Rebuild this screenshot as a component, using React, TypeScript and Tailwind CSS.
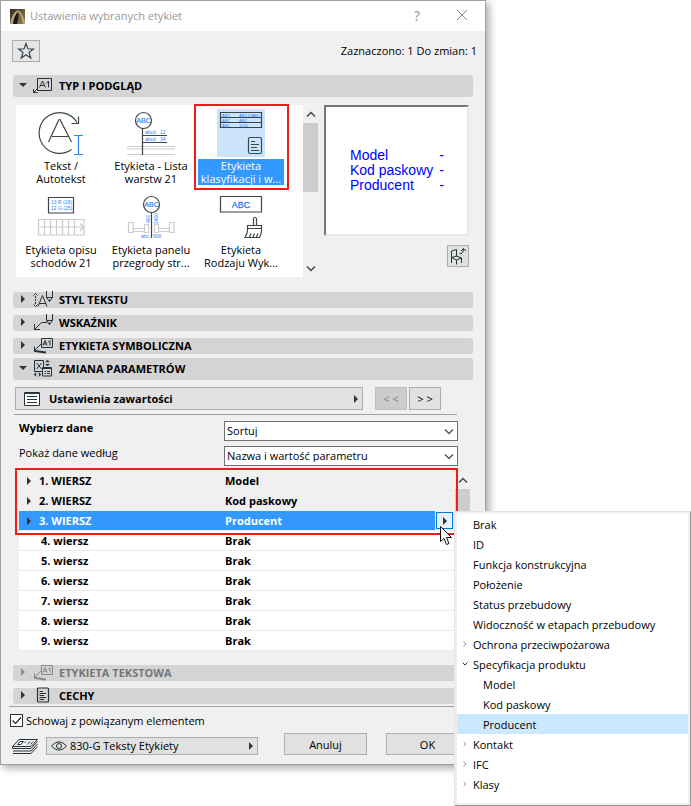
import React from "react";
import clsx from "clsx";

const rows = [
  { name: "1. WIERSZ", value: "Model", group: true },
  { name: "2. WIERSZ", value: "Kod paskowy", group: true },
  { name: "3. WIERSZ", value: "Producent", group: true, active: true },
  { name: "4. wiersz", value: "Brak" },
  { name: "5. wiersz", value: "Brak" },
  { name: "6. wiersz", value: "Brak" },
  { name: "7. wiersz", value: "Brak" },
  { name: "8. wiersz", value: "Brak" },
  { name: "9. wiersz", value: "Brak" },
];

const menuItems = [
  { label: "Brak" },
  { label: "ID" },
  { label: "Funkcja konstrukcyjna" },
  { label: "Położenie" },
  { label: "Status przebudowy" },
  { label: "Widoczność w etapach przebudowy" },
  { label: "Ochrona przeciwpożarowa", arrow: "right" },
  { label: "Specyfikacja produktu", arrow: "down" },
  { label: "Model", child: true },
  { label: "Kod paskowy", child: true },
  { label: "Producent", child: true, active: true },
  { label: "Kontakt", arrow: "right" },
  { label: "IFC", arrow: "right" },
  { label: "Klasy", arrow: "right" },
];

type IconProps = { className?: string };

function TriangleRight({ className }: IconProps) {
  return (
    <svg viewBox="0 0 4 8" className={clsx("w-1 h-2 shrink-0", className)} fill="#333">
      <path d="M0 0L4 4L0 8Z" />
    </svg>
  );
}

function TriangleDown() {
  return (
    <svg viewBox="0 0 8 4" className="w-2 h-1 shrink-0" fill="#333">
      <path d="M0 0H8L4 4Z" />
    </svg>
  );
}

function Chevron({ className }: IconProps) {
  return (
    <svg viewBox="0 0 10 6" className={clsx("w-[10px] h-[6px]", className)} fill="none" stroke="currentColor" strokeWidth="1.4">
      <path d="M1 0.5L5 4.5L9 0.5" />
    </svg>
  );
}

/* ---------- section icons, all on a 22x18 grid ---------- */

function SectionIcon({ children }: { children: React.ReactNode }) {
  return (
    <svg viewBox="0 0 22 18" className="w-[22px] h-[18px] -my-1 shrink-0" fill="none" stroke="#26323a" strokeWidth="1">
      {children}
    </svg>
  );
}

function IconPreview() {
  return (
    <SectionIcon>
      <path d="M4.5 2.5H18.5V14.5H4.5V2.5M4.5 12.5L0.5 16.5M0.5 13V16.5H4.5" />
      <path d="M6.5 11.5L9.5 5L12.5 11.5M7.5 9.5H11.5M13 7.5L15.5 5V11.5" />
    </SectionIcon>
  );
}

function IconTextStyle() {
  return (
    <SectionIcon>
      <path d="M2.5 6V15" strokeDasharray="2 1" />
      <path d="M0.5 5.5L2.5 3.5L4.5 5.500M0.5 14.5L2.5 16.5L4.5 14.5" />
      <path d="M5 16.5L9.5 5.5L14 16.5M6.5 13.5H13" />
      <path d="M13.5 1V7.5L16.5 11.5L19.5 7.5V1M13.5 7.5H19.5M16.5 9.5V12" />
    </SectionIcon>
  );
}

function IconPointer() {
  return (
    <SectionIcon>
      <path d="M1.5 11V16.5H7M1.5 16.5L8.5 9.5H14" />
      <path d="M13.5 1V7.5L16.5 11.5L19.5 7.5V1M13.5 7.5H19.5M16.5 9.5V12" />
    </SectionIcon>
  );
}

function IconSymbolic() {
  return (
    <SectionIcon>
      <path d="M8.5 2.5H19.5V11.5H8.5Z" />
      <path d="M10 9.5L12 4.5L14 9.5M10.5 8H13.5M15 6.5L17 4.5V9.5" />
      <path d="M8.5 7.5L1.5 14.5M1.5 10.5V15.5H5.5" />
      <path d="M2 15L13 16.5" strokeWidth="2" />
    </SectionIcon>
  );
}

function IconParams() {
  return (
    <SectionIcon>
      <path d="M1.5 1.5H10.5V12.5H1.5Z" />
      <path d="M3.5 4L8.5 10M8.5 4L3.5 10" />
      <path d="M9.5 8.5H18.5V17H9.5Z" fill="#d4d4d4" />
      <path d="M9.5 9.5H18.5M11.5 12.5H13M14 12.5H17M11.5 14.5H13M14 14.5H17" />
      <path d="M12.5 3L14.5 1L16.5 3ZM12.5 5L14.5 7L16.5 5ZM3 13.5L1 15.5L3 17.5ZM6 13.5L8 15.5L6 17.5Z" fill="#26323a" strokeWidth="0.3" />
    </SectionIcon>
  );
}

function IconDoc() {
  return (
    <SectionIcon>
      <rect x="4.5" y="2" width="11" height="14" rx="1" strokeWidth="1.2" />
      <path d="M6.5 5.5H10M6.5 7.5H13M6.5 9.5H11M6.5 11.5H13M6.5 13.5H11" />
    </SectionIcon>
  );
}

/* ---------- label type thumbnails, 48x48 ---------- */

function Thumb({ viewBox = "0 -2 48 48", children }: { viewBox?: string; children: React.ReactNode }) {
  return (
    <svg viewBox={viewBox} className="w-12 h-12 block mx-auto" fill="none" stroke="#3a464e" strokeWidth="1.2" fontFamily="'Liberation Sans', sans-serif">
      {children}
    </svg>
  );
}

function ThumbAutotext() {
  return (
    <Thumb viewBox="0 0 48 48">
      <path d="M40 13.5A20.4 20.4 0 1 0 34.5 40.5" />
      <path d="M34.5 14.5H41.5V7.5" />
      <path d="M11.5 33L21.5 11.5Q22.5 9 23.5 11.5L34.5 33M15 27.5H31.5" />
      <path d="M37 26.5H46M37 45.5H46M41.5 26.5V45.5" stroke="#2f82f0" />
    </Thumb>
  );
}

function ThumbLayers() {
  return (
    <Thumb>
      <path d="M0 35.5H48M0 38H48M0 43.5H48" stroke="#ccc" />
      <circle cx="16.5" cy="9.5" r="8" />
      <path d="M15.5 17.5V44M15.5 24.5H40M15.5 31.5H40" />
      <g fill="#2f82f0" stroke="none">
        <text x="16.5" y="12" fontSize="7" textAnchor="middle" stroke="#2f82f0" strokeWidth="0.2">ABC</text>
        <text x="18" y="23" fontSize="5">abcd</text>
        <text x="33" y="23" fontSize="5">12</text>
        <text x="18" y="30" fontSize="5">abcd</text>
        <text x="33" y="30" fontSize="5">34</text>
      </g>
    </Thumb>
  );
}

function ThumbClassification() {
  return (
    <Thumb viewBox="0 0 48 48">
      <path d="M3.5 3.5H44.5V18.5H3.5ZM3.5 8.5H44.5M3.5 13.5H44.5" />
      <g fill="#2f82f0" stroke="none" fontSize="4">
        <text x="5" y="7.5">ABC</text>
        <text x="22" y="7.5">ABC12ABC</text>
        <text x="5" y="12.5">ABC</text>
        <text x="22" y="12.5">ABC</text>
        <text x="5" y="17.5">ABC</text>
        <text x="22" y="17.5">1000</text>
      </g>
      <rect x="31.5" y="28.5" width="13" height="16" rx="1.5" />
      <path d="M34 32.5H38M34 35.5H42M34 38.5H40M34 41.5H42" />
    </Thumb>
  );
}

function ThumbStairs() {
  return (
    <Thumb>
      <path d="M11.5 2.5H36.5V18H11.5Z" />
      <g fill="#2f82f0" stroke="none" fontSize="5">
        <text x="14" y="9">13 R (18)</text>
        <text x="14" y="15">12 G (25)</text>
      </g>
      <path d="M1.5 24.5H47V40H1.5ZM1.5 32H46M7.5 24V40M13.5 24V40M19.5 24V40M25.5 24V40M31.5 24V40M37.5 24V40M43 28.5L46.5 32L43 36" stroke="#ccc" />
    </Thumb>
  );
}

function ThumbCurtainWall() {
  return (
    <Thumb>
      <path d="M1.5 27.5H6V37.5H1.5ZM17.5 29.5H21.5V37.5H17.5ZM27.5 29.5H31.5V37.5H27.5ZM42.5 27.5H47V37.5H42.5ZM6 33.5H17M6 36.5H17M32 33.5H42M32 36.5H42" stroke="#ccc" />
      <circle cx="24.5" cy="9.5" r="8" />
      <path d="M24.5 17.5V43" />
      <g fill="#2f82f0" stroke="none">
        <text x="24.5" y="12" fontSize="7" textAnchor="middle" stroke="#2f82f0" strokeWidth="0.2">ABC</text>
        <text x="14" y="43" fontSize="5">abc</text>
        <text x="26" y="43" fontSize="5">900</text>
        <text transform="translate(23 28) rotate(-90)" fontSize="5">400</text>
        <text transform="translate(30.5 29) rotate(-90)" fontSize="5">2400</text>
      </g>
    </Thumb>
  );
}

function ThumbBrush() {
  return (
    <Thumb>
      <path d="M3.5 1.5H44.5V17H3.5Z" />
      <text x="24" y="12.5" fontSize="9" textAnchor="middle" fill="#2f82f0" stroke="#2f82f0" strokeWidth="0.3">ABC</text>
      <path d="M36.5 30V23.5Q38 21 39.5 23.5V30M30.5 33.5V30.5H44.5V33.5M30.5 33.5H44.5M30.5 33.5Q31 38 28 42.5H42.5Q45 38 44.5 33.5M32.5 42L34 38.5M36 42L37.5 38.5M39.5 42L41 38.5" />
    </Thumb>
  );
}

const labelTypes = [
  { lines: ["Tekst /", "Autotekst"], Icon: ThumbAutotext },
  { lines: ["Etykieta - Lista", "warstw 21"], Icon: ThumbLayers },
  { lines: ["Etykieta", "klasyfikacji i w..."], Icon: ThumbClassification, active: true },
  { lines: ["Etykieta opisu", "schodów 21"], Icon: ThumbStairs },
  { lines: ["Etykieta panelu", "przegrody str..."], Icon: ThumbCurtainWall },
  { lines: ["Etykieta", "Rodzaju Wyk..."], Icon: ThumbBrush },
];

type SectionProps = {
  title: string;
  icon: React.ReactNode;
  open?: boolean;
  disabled?: boolean;
};

function Section({ title, icon, open, disabled }: SectionProps) {
  return (
    <button
      type="button"
      aria-expanded={!!open}
      disabled={disabled}
      className={clsx("w-full flex items-center rounded-[3px] bg-[#d4d4d4] pl-[6px] pb-[2px] font-bold text-left", open ? "h-[22px]" : "h-4")}
    >
      <span className={clsx("flex items-center", disabled && "opacity-45")}>
        <span className="w-[14px] flex justify-start">{open ? <TriangleDown /> : <TriangleRight className="ml-[2px]" />}</span>
        {icon}
        <span className="pl-1">{title}</span>
      </span>
    </button>
  );
}

function SelectBox({ id, value }: { id: string; value: string }) {
  return (
    <div className="relative flex-1">
      <select id={id} className="appearance-none w-full h-5 block bg-white border border-[#707070] pl-[2px] pb-[2px]">
        <option>{value}</option>
      </select>
      <Chevron className="absolute right-1 top-[8px] text-[#555] pointer-events-none" />
    </div>
  );
}

function ContextMenu() {
  return (
    <div role="menu" className="absolute z-10 left-[19px] top-0 w-[237px] border border-t-[#e3e3e3] border-l-[#e3e3e3] border-r-[#999] border-b-[#999] bg-white font-normal text-black">
      <div className="border-2 border-[#f0f0f0] border-t-[#f4f4f4] pb-[9px]">
        {menuItems.map((item) => (
          <button
            key={item.label}
            type="button"
            role="menuitem"
            className={clsx("w-full h-5 flex items-center text-left whitespace-nowrap", item.active && "bg-[#cce8ff]", item.child && "pl-[10px]")}
          >
            <span className="w-4 flex justify-center">
              {item.arrow && (
                <svg viewBox="0 0 6 6" className="w-[6px] h-[6px]" fill="none" stroke={item.arrow === "down" ? "#333" : "#999"}>
                  <path d={item.arrow === "down" ? "M0.5 1.5L3 4L5.5 1.5" : "M1.5 0.5L4 3L1.5 5.5"} />
                </svg>
              )}
            </span>
            {item.label}
          </button>
        ))}
      </div>
    </div>
  );
}

function Cursor() {
  return (
    <svg viewBox="0 0 13 20" className="absolute z-20 left-[5px] top-[15px] w-[13px] h-5 pointer-events-none" fill="#fff" stroke="#111">
      <path d="M0.5 0.5V15.5L4 12.5L6.5 18.5L9 17.5L6.5 11.5H11.5Z" />
    </svg>
  );
}

function ParameterTable() {
  return (
    <div className="relative flex-1">
      <table className="w-full table-fixed border-separate border-spacing-0 font-bold">
        <tbody>
          {rows.map((row) => (
            <tr key={row.name} className={clsx("h-5", row.active ? "bg-[#3399ff] text-white" : row.group ? "bg-[#f0f0f0]" : "bg-white")}>
              <td className="w-[206px] p-0 border-b border-[#ebebeb]">
                <div className="flex items-center h-[19px]">
                  <span className={row.group ? "w-5 pl-2" : "w-[22px]"}>{row.group && <TriangleRight />}</span>
                  {row.name}
                </div>
              </td>
              <td className="p-0 border-b border-[#ebebeb]">
                <div className="flex items-center justify-between h-[19px]">
                  {row.value}
                  {row.active && (
                    <div className="relative bg-[#f0f0f0] pl-px pr-[2px] h-[19px] flex items-center">
                      <button type="button" aria-label="Wybierz parametr" className="w-[17px] h-[17px] flex items-center justify-center bg-[#e5f1fb] border border-[#0078d7]">
                        <TriangleRight />
                      </button>
                      <Cursor />
                      <ContextMenu />
                    </div>
                  )}
                </div>
              </td>
            </tr>
          ))}
        </tbody>
      </table>
      <div className="absolute -top-[3px] -left-1 -right-[3px] h-[67px] border-2 border-[#f21b1b] pointer-events-none" />
    </div>
  );
}

function App() {
  return (
    <main className="min-h-screen bg-white pr-[205px] font-['Open_Sans','Noto_Sans',sans-serif] text-[11px] leading-[13px] text-black">
      <div className="border border-[#a0a0a0] bg-[#f0f0f0] shadow-[3px_3px_8px_rgba(0,0,0,0.35)]">
        <header className="h-[30px] bg-white flex items-center pl-[9px] pr-[17px] text-[#999]">
          <svg viewBox="0 0 15 15" className="w-[15px] h-[15px]">
            <defs>
              <linearGradient id="logo" x1="0" y1="0" x2="1" y2="1">
                <stop offset="0" stopColor="#2d251c" />
                <stop offset="0.5" stopColor="#6b5a3e" />
                <stop offset="1" stopColor="#8f7c58" />
              </linearGradient>
            </defs>
            <path d="M0 0H15V15H0Z" fill="url(#logo)" />
            <path d="M0 15Q2 4 8 1Q12 3 15 13V15H13Q11 6 8 3Q4 7 3 15Z" fill="#b5a47e" />
            <path d="M3 15Q4 7 8 3Q9 7 7 15Z" fill="#1d1712" />
          </svg>
          <h1 className="pl-[5px] pb-[2px] flex-1">Ustawienia wybranych etykiet</h1>
          <button type="button" aria-label="Pomoc" className="text-[14px] pb-[2px] pr-9">?</button>
          <button type="button" aria-label="Zamknij" className="pb-[2px]">
            <svg viewBox="0 0 12 12" className="w-3 h-3" fill="none" stroke="#888">
              <path d="M1 1L11 11M11 1L1 11" />
            </svg>
          </button>
        </header>

        <div className="flex items-center justify-between pl-[11px] pr-2 pt-[9px]">
          <button type="button" aria-label="Ulubione" className="w-7 h-[22px] flex items-center justify-center border border-[#adadad] bg-[#e6e6e6]">
            <svg viewBox="0 0 18 18" className="w-[18px] h-[18px]" fill="none" stroke="#37474f" strokeWidth="1.2">
              <path d="M9 1.5L11 7H16.5L12 10.5L13.8 16L9 12.7L4.2 16L6 10.5L1.5 7H7Z" />
            </svg>
          </button>
          <p className="pb-[2px]">Zaznaczono: 1 Do zmian: 1</p>
        </div>

        <div className="px-3 pt-[13px]">
          <Section title="TYP I PODGLĄD" icon={<IconPreview />} open />

          <div className="flex pl-[3px] pr-1 pt-2 pb-[15px]">
            <div className="flex-1 flex">
              <div className="flex-1 grid grid-cols-3 gap-x-1 content-start bg-white pl-[2px] pr-[19px] pt-1">
                {labelTypes.map(({ lines, Icon, active }) => (
                  <button key={lines.join(" ")} type="button" className="relative h-[84px] flex flex-col items-stretch text-center whitespace-nowrap">
                    <span className={clsx("w-12 mx-auto block", active && "bg-[#cce4fb]")}>
                      <Icon />
                    </span>
                    <span className={clsx("mt-[2px] block", active && "bg-[#3399ff] text-white")}>
                      <span className="block">{lines[0]}</span>
                      <span className="block">{lines[1]}</span>
                    </span>
                    {active && <span className="absolute -top-[5px] -left-1 -right-[5px] h-[86px] border-2 border-[#f21b1b]" />}
                  </button>
                ))}
              </div>
              <div className="w-[15px] flex flex-col items-center text-[#444]">
                <Chevron className="my-[6px] rotate-180" />
                <div className="w-full h-[69px] bg-[#cdcdcd]" />
                <Chevron className="mt-auto mb-[5px]" />
              </div>
            </div>
            <div className="w-[145px] ml-[6px] flex flex-col items-end">
              <div className="w-full h-[131px] border-2 border-t-[#777] border-l-[#777] border-r-[#e8e8e8] border-b-[#e8e8e8] bg-white pl-6 pr-[23px] flex items-center">
                <dl className="w-full grid grid-cols-[1fr_auto] text-[#0000ff] text-[14px] leading-[15px] font-['Liberation_Sans',sans-serif]">
                  <dt>Model</dt>
                  <dd>-</dd>
                  <dt>Kod paskowy</dt>
                  <dd>-</dd>
                  <dt>Producent</dt>
                  <dd>-</dd>
                </dl>
              </div>
              <button type="button" aria-label="Widok 3D" className="mt-[9px] w-[22px] h-[22px] border border-[#adadad] bg-[#e1e1e1] flex items-center justify-center">
                <svg viewBox="0 0 18 18" className="w-[18px] h-[18px]" fill="none" stroke="#26323a">
                  <path d="M2.5 16V4L7.5 2.5V9.5M2.5 10.5L7.5 9L12.5 11L7.5 13L2.5 10.5M7.5 13V17.5M12.5 11V16M10.5 6.5Q14.5 7 14.5 1.5M12 4L14.5 1.5L17 4" />
                </svg>
              </button>
            </div>
          </div>

          <div className="flex flex-col gap-[7px]">
            <Section title="STYL TEKSTU" icon={<IconTextStyle />} />
            <Section title="WSKAŹNIK" icon={<IconPointer />} />
            <Section title="ETYKIETA SYMBOLICZNA" icon={<IconSymbolic />} />
          </div>
          <div className="pt-1">
            <Section title="ZMIANA PARAMETRÓW" icon={<IconParams />} open />
          </div>

          <div className="flex pt-[7px] pl-[2px] pr-8 pb-1">
            <button type="button" className="flex-1 h-[23px] flex items-center border border-[#adadad] bg-[#e1e1e1] pl-2 pr-1 font-bold">
              <svg viewBox="0 0 16 14" className="w-4 h-[14px]" fill="#fff" stroke="#26323a">
                <path d="M0.5 0.5H15.5V13.5H0.5ZM0.5 1.5H15.5M3 4.5H13M3 7.5H13M3 10.5H13" />
              </svg>
              <span className="pl-[9px] flex-1 text-left">Ustawienia zawartości</span>
              <TriangleRight />
            </button>
            <button type="button" disabled className="w-8 h-[23px] ml-3 border border-[#bfbfbf] bg-[#ccc] text-[#838383]">&lt; &lt;</button>
            <button type="button" className="w-8 h-[23px] ml-[2px] border border-[#adadad] bg-[#e1e1e1]">&gt; &gt;</button>
          </div>

          <div className="ml-px mr-4 border-t border-[#a0a0a0] pt-[6px] flex flex-col gap-[5px]">
            <div className="flex items-start pl-[5px] -mr-px">
              <label htmlFor="dane" className="w-[205px] font-bold">Wybierz dane</label>
              <SelectBox id="dane" value="Sortuj" />
            </div>
            <div className="flex items-start pl-[5px] -mr-px">
              <label htmlFor="wedlug" className="w-[205px]">Pokaż dane według</label>
              <SelectBox id="wedlug" value="Nazwa i wartość parametru" />
            </div>
          </div>

          <div className="flex pt-[5px] pl-[6px] pr-[3px] pb-[14px]">
            <ParameterTable />
            <div className="w-[15px] flex flex-col items-center text-[#444]">
              <Chevron className="my-[6px] rotate-180" />
              <div className="w-full h-[60px] bg-[#cdcdcd]" />
            </div>
          </div>

          <div className="flex flex-col gap-[7px]">
            <Section title="ETYKIETA TEKSTOWA" icon={<IconSymbolic />} disabled />
            <Section title="CECHY" icon={<IconDoc />} />
          </div>
        </div>

        <footer className="mt-[2px] ml-2 mr-3 border-t border-[#a0a0a0] pt-[7px] pb-[9px]">
          <label className="relative flex items-center h-[13px] gap-[3px] pl-px">
            <input type="checkbox" defaultChecked className="peer appearance-none w-[13px] h-[13px] border border-[#333] bg-white" />
            <svg viewBox="0 0 13 13" className="absolute left-px top-0 w-[13px] h-[13px] hidden peer-checked:block pointer-events-none" fill="none" stroke="#222" strokeWidth="1.2">
              <path d="M2.5 6.5L5.5 9.5L11 3.5" />
            </svg>
            Schowaj z powiązanym elementem
          </label>
          <div className="flex items-end pt-[6px] pl-[3px] pr-1">
            <svg viewBox="0 0 26 16" className="w-[26px] h-4 mb-px" fill="none" stroke="#26323a">
              <path d="M7 1.5H25.5L19 8.5H0.5ZM0.5 8.5V10.5H19L25.5 3.5M1 13H19L25.5 6M1 15.5H19L25.5 8.5" />
              <path d="M8 3.5L5.5 6.5H9L11.5 3.5ZM14 3.5L12.5 5M18 3.5L15.5 6.5M21 3.5L18.5 6.5" />
            </svg>
            <button type="button" className="w-[212px] h-[18px] ml-2 flex items-center border border-[#adadad] bg-[#e1e1e1] pl-1 pr-1">
              <svg viewBox="0 0 16 12" className="w-4 h-3" fill="none" stroke="#26323a">
                <path d="M0.5 6Q8 -2.5 15.5 6Q8 14.5 0.5 6Z" />
                <circle cx="8" cy="6" r="2.5" />
              </svg>
              <span className="pl-[3px] pb-[2px] flex-1 text-left">830-G Teksty Etykiety</span>
              <TriangleRight />
            </button>
            <div className="flex flex-1 justify-between pl-[26px]">
              <button type="button" className="w-[83px] h-[22px] border border-[#adadad] bg-[#e1e1e1]">Anuluj</button>
              <button type="button" className="w-[83px] h-[22px] border border-[#adadad] bg-[#e1e1e1]">OK</button>
            </div>
          </div>
        </footer>
      </div>
    </main>
  );
}

export default App;
